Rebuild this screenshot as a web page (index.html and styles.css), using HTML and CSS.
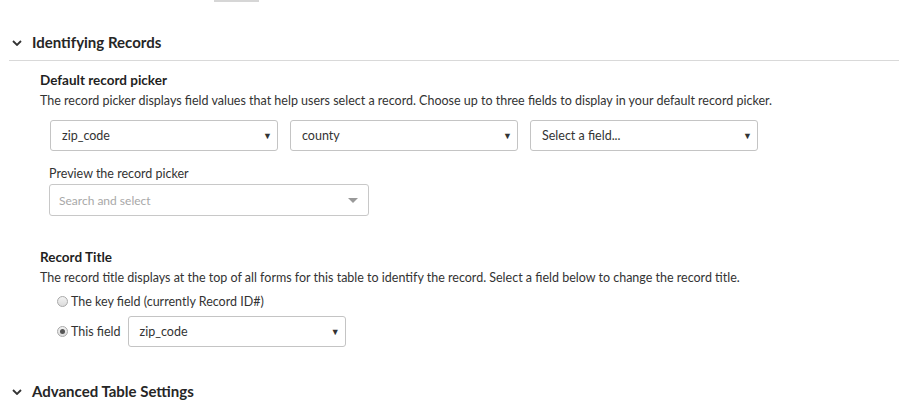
FILE: index.html
```html
<!DOCTYPE html>
<html>
<head>
<meta charset="utf-8">
<link rel="stylesheet" href="styles.css">
</head>
<body>
<div class="topbar"></div>
<section class="section">
  <div class="section-head">
    <svg class="chev" width="10" height="6" viewBox="0 0 10 6"><path d="M1 1 L5 5 L9 1" fill="none" stroke="#333" stroke-width="1.8"/></svg>
    <span>Identifying Records</span>
  </div>
  <div class="section-body">
    <h3 class="sub">Default record picker</h3>
    <p class="desc">The record picker displays field values that help users select a record. Choose up to three fields to display in your default record picker.</p>
    <div class="selects">
      <div class="select"><span>zip_code</span><span class="tri">▼</span></div>
      <div class="select"><span>county</span><span class="tri">▼</span></div>
      <div class="select"><span>Select a field...</span><span class="tri">▼</span></div>
    </div>
    <div class="preview">
      <div class="preview-label">Preview the record picker</div>
      <div class="search"><span>Search and select</span><svg width="10" height="5" viewBox="0 0 10 5"><path d="M0 0 L10 0 L5 5 Z" fill="#999"/></svg></div>
    </div>
    <h3 class="sub title2">Record Title</h3>
    <p class="desc">The record title displays at the top of all forms for this table to identify the record. Select a field below to change the record title.</p>
    <div class="radios">
      <label class="radio-row"><span class="radio"></span>The key field (currently Record ID#)</label>
      <label class="radio-row"><span class="radio checked"></span>This field <div class="select small"><span>zip_code</span><span class="tri">▼</span></div></label>
    </div>
  </div>
</section>
<section class="section adv">
  <div class="section-head">
    <svg class="chev" width="10" height="6" viewBox="0 0 10 6"><path d="M1 1 L5 5 L9 1" fill="none" stroke="#333" stroke-width="1.8"/></svg>
    <span>Advanced Table Settings</span>
  </div>
</section>
</body>
</html>
```
FILE: styles.css
```css
* { box-sizing: border-box; }
html, body { margin: 0; padding: 0; background: #fff; }
body {
  font-family: Lato, "Open Sans", sans-serif;
  color: #333;
  font-size: 12.5px;
  width: 899px;
  height: 400px;
  overflow: hidden;
}
.topbar {
  margin-left: 214px;
  width: 45px;
  height: 2px;
  background: #d6d6d6;
}
.section-head {
  display: flex;
  align-items: center;
  font-size: 15px;
  font-weight: 700;
  color: #262626;
  padding-left: 12px;
  height: 20px;
}
.chev { margin-right: 10px; margin-top: 1px; }
.section:first-of-type .section-head { margin-top: 30px; }
.section-body {
  border-top: 1px solid #d9d9d9;
  margin: 8px 0 0 9px;
  padding-left: 31px;
}
.sub {
  margin: 10px 0 0 0;
  font-size: 13.5px;
  font-weight: 700;
  color: #1f1f1f;
  line-height: 18px;
}
.desc {
  margin: 4px 0 0 0;
  font-size: 12.5px;
  line-height: 16px;
  color: #333;
}
.selects {
  display: flex;
  gap: 12px;
  margin: 11px 0 0 10px;
}
.select {
  width: 228px;
  height: 31px;
  border: 1px solid #c4c4c4;
  border-radius: 3px;
  display: flex;
  align-items: center;
  justify-content: space-between;
  padding: 0 5px 0 11px;
  font-size: 12.5px;
  color: #333;
  background: #fff;
}
.tri { font-size: 9px; color: #333; }
.preview { margin: 15px 0 0 9px; }
.preview-label { font-size: 12.5px; line-height: 16px; color: #333; }
.search {
  margin-top: 2px;
  width: 320px;
  height: 32px;
  border: 1px solid #c8c8c8;
  border-radius: 3px;
  display: flex;
  align-items: center;
  justify-content: space-between;
  padding: 0 10px 0 9px;
  color: #a8a8a8;
  font-size: 12px;
}
.title2 { margin-top: 32px; }
.radios { margin: 4px 0 0 17px; }
.radio-row {
  display: flex;
  align-items: center;
  font-size: 12.5px;
  color: #333;
  height: 22px;
}
.radio-row + .radio-row { height: 31px; margin-top: 4px; }
.radio {
  width: 11px;
  height: 11px;
  border-radius: 50%;
  border: 1px solid #a9a9a9;
  background: linear-gradient(#f2f2f2, #dcdcdc);
  margin-right: 3px;
  position: relative;
}
.radio.checked::after {
  content: "";
  position: absolute;
  left: 2px; top: 2px;
  width: 5px; height: 5px;
  border-radius: 50%;
  background: #555;
}
.select.small { width: 218px; margin-left: 7px; }
.adv .section-head { margin-top: 34px; }
```
